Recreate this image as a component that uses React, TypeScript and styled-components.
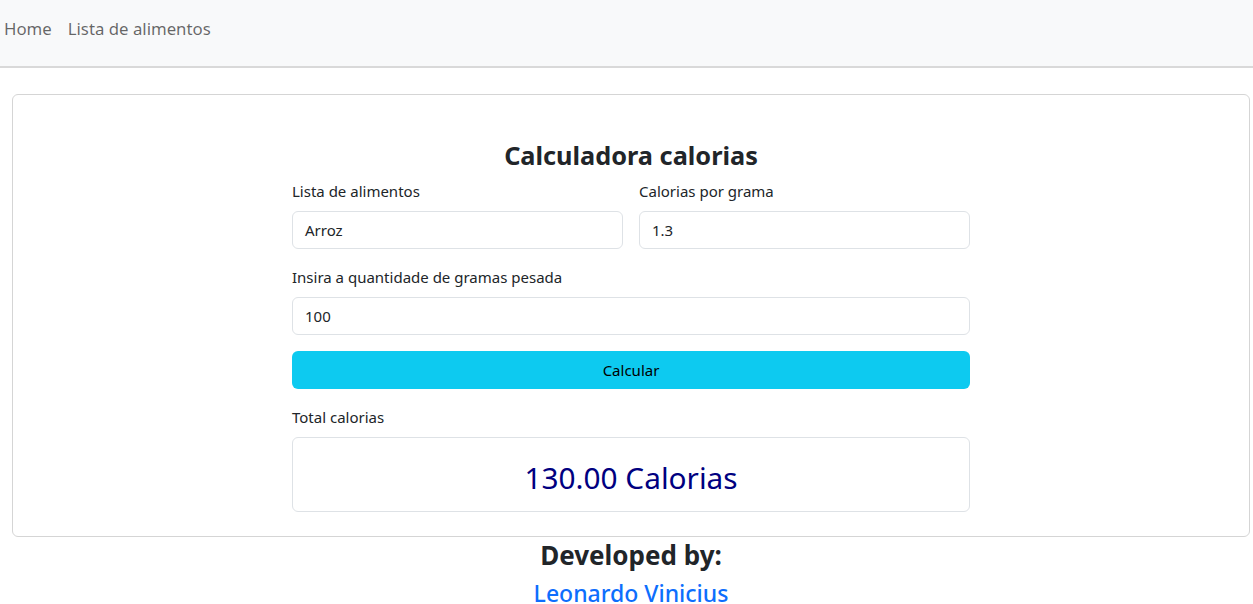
import React from "react";
import styled, { createGlobalStyle } from "styled-components";

const Global = createGlobalStyle`
  html, body { margin: 0; padding: 0; background: #fff; }
  body { font-family: "Noto Sans", "Open Sans", sans-serif; color: #212529; }
  * { box-sizing: border-box; }
`;

const Navbar = styled.nav`
  height: 68px;
  background: #f8f9fa;
  border-bottom: 2px solid #d9d9d9;
  display: flex;
  align-items: center;
  padding: 0 4px 10px;
  gap: 16px;
`;

const NavLink = styled.a`
  font-size: 16.8px;
  color: rgba(0, 0, 0, 0.6);
  text-decoration: none;
`;

const Main = styled.main`
  padding: 26px 3px 0 12px;
`;

const Card = styled.section`
  border: 1px solid #d5d5d5;
  border-radius: 6px;
  display: flex;
  justify-content: center;
  padding: 40px 0 24px;
`;

const Form = styled.div`
  width: 678px;
  display: flex;
  flex-direction: column;
`;

const Title = styled.h2`
  margin: 0 0 5px;
  font-size: 25.3px;
  font-weight: 700;
  text-align: center;
  line-height: 40px;
`;

const Row = styled.div`
  display: grid;
  grid-template-columns: 1fr 1fr;
  gap: 16px;
`;

const Field = styled.div`
  display: flex;
  flex-direction: column;
  margin-bottom: 17px;
`;

const Label = styled.label`
  font-size: 15px;
  line-height: 22px;
  margin-bottom: 9px;
`;

const Input = styled.div`
  height: 38px;
  border: 1px solid #dee2e6;
  border-radius: 6px;
  padding: 0 12px;
  display: flex;
  align-items: center;
  font-size: 15px;
  color: #212529;
`;

const Button = styled.button`
  height: 38px;
  margin-top: -1px;
  border: none;
  border-radius: 6px;
  background: #0dcaf0;
  color: #000;
  font-family: inherit;
  font-size: 15px;
  margin-bottom: 17px;
`;

const Result = styled.div`
  height: 75px;
  border: 1px solid #dee2e6;
  border-radius: 6px;
  display: flex;
  align-items: center;
  justify-content: center;
  font-size: 29.8px;
  color: #000080;
  padding-top: 5px;
`;

const Footer = styled.footer`
  text-align: center;
  padding-top: 1px;
`;

const FooterTitle = styled.h3`
  margin: 0;
  font-size: 26px;
  font-weight: 700;
  line-height: 34px;
`;

const Author = styled.a`
  display: block;
  margin-top: 10px;
  font-size: 23px;
  font-weight: 500;
  color: #0d6efd;
  text-decoration: none;
  line-height: 22px;
`;

export default function App() {
  return (
    <>
      <Global />
      <Navbar>
        <NavLink href="#">Home</NavLink>
        <NavLink href="#">Lista de alimentos</NavLink>
      </Navbar>
      <Main>
        <Card>
          <Form>
            <Title>Calculadora calorias</Title>
            <Row>
              <Field>
                <Label>Lista de alimentos</Label>
                <Input>Arroz</Input>
              </Field>
              <Field>
                <Label>Calorias por grama</Label>
                <Input>1.3</Input>
              </Field>
            </Row>
            <Field>
              <Label>Insira a quantidade de gramas pesada</Label>
              <Input>100</Input>
            </Field>
            <Button>Calcular</Button>
            <Label>Total calorias</Label>
            <Result>130.00 Calorias</Result>
          </Form>
        </Card>
        <Footer>
          <FooterTitle>Developed by:</FooterTitle>
          <Author href="#">Leonardo Vinicius</Author>
        </Footer>
      </Main>
    </>
  );
}
